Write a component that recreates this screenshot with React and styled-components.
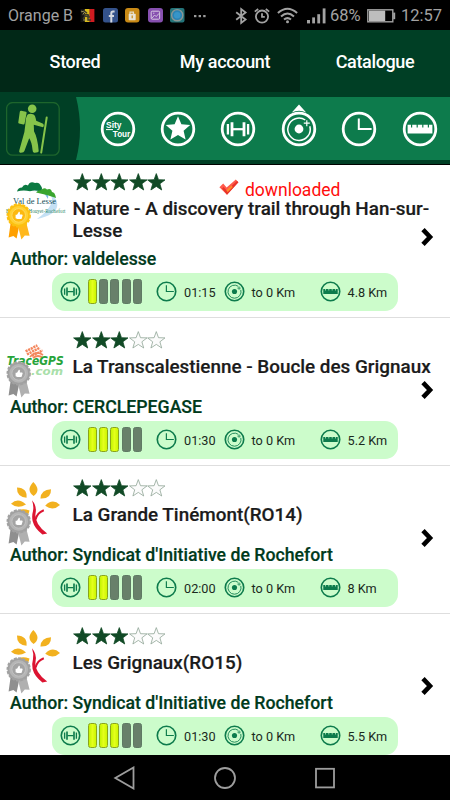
import React from "react";
import styled, { createGlobalStyle } from "styled-components";

const trails = [
  {
    logo: "lesse", medal: "gold", stars: 5, downloaded: true, level: 1,
    title: "Nature - A discovery trail through Han-sur-Lesse",
    author: "valdelesse", time: "01:15", away: "to 0 Km", length: "4.8 Km",
  },
  {
    logo: "trace", medal: "silver", stars: 3, level: 3,
    title: "La Transcalestienne - Boucle des Grignaux",
    author: "CERCLEPEGASE", time: "01:30", away: "to 0 Km", length: "5.2 Km",
  },
  {
    logo: "tree", medal: "silver", stars: 3, level: 2,
    title: "La Grande Tinémont(RO14)",
    author: "Syndicat d'Initiative de Rochefort", time: "02:00", away: "to 0 Km", length: "8 Km",
  },
  {
    logo: "tree", medal: "silver", stars: 3, level: 3,
    title: "Les Grignaux(RO15)",
    author: "Syndicat d'Initiative de Rochefort", time: "01:30", away: "to 0 Km", length: "5.5 Km",
  },
];

export default function App() {
  return (
    <Screen>
      <GlobalStyle />
      <StatusBar>
        <Carrier>Orange B</Carrier>
        <Notifications>
          <FlagIcon />
          <FacebookIcon />
          <LockIcon />
          <PictureIcon />
          <RingIcon />
        </Notifications>
        <MoreIcon />
        <SystemIcons />
        <Percent>68%</Percent>
        <BatteryIcon />
        <Clock>12:57</Clock>
      </StatusBar>

      <Tabs>
        <Tab>Stored</Tab>
        <Tab>My account</Tab>
        <Tab $active>Catalogue</Tab>
      </Tabs>

      <Toolbar>
        <HikerButton><HikerIcon /></HikerButton>
        <Strip>
          <StripEdge viewBox="0 0 5 63"><path d="M0 0 Q8 32 0 63 Z" fill="#003f25" /></StripEdge>
          {["city", "star", "dumbbell", "radar", "clock", "ruler"].map((name) => (
            <FilterButton key={name}><RoundIcon name={name} /></FilterButton>
          ))}
        </Strip>
      </Toolbar>

      <List>
        {trails.map((trail) => (
          <TrailRow key={trail.title} {...trail} />
        ))}
      </List>

      <NavBar>
        <NavIcon viewBox="0 0 24 24"><path d="M20.5 1.5v21L2.3 12z" /></NavIcon>
        <NavIcon viewBox="0 0 24 24"><circle cx="12" cy="12" r="10" /></NavIcon>
        <NavIcon viewBox="0 0 24 24"><rect x="3" y="2.8" width="18" height="18.6" /></NavIcon>
      </NavBar>
    </Screen>
  );
}

function TrailRow({ logo, medal, stars, downloaded, level, title, author, time, away, length }) {
  return (
    <Row>
      <RowTop $tall={downloaded}>
        <Thumb>
          <Logo name={logo} />
          <Medal tone={medal} />
        </Thumb>
        <Info>
          <Rating>
            {[0, 1, 2, 3, 4].map((i) => (
              <Star key={i} viewBox="0 0 18.6 18" $on={i < stars}>
                <path d="M9.3.6 11.5 6.7 18 6.9 12.9 10.8 14.7 17 9.3 13.4 3.9 17 5.7 10.8.6 6.9 7.1 6.7z" />
              </Star>
            ))}
            {downloaded && <Downloaded><CheckIcon />downloaded</Downloaded>}
          </Rating>
          <Title>{title}</Title>
        </Info>
      </RowTop>
      <Author>Author: {author}</Author>
      <Pill>
        <RoundIcon name="dumbbell" small />
        <Bars>
          {[0, 1, 2, 3, 4].map((i) => <Bar key={i} $on={i < level} />)}
        </Bars>
        <RoundIcon name="clock" small />
        <Value>{time}</Value>
        <RoundIcon name="radar" small />
        <Value>{away}</Value>
        <RoundIcon name="ruler" small />
        <Value>{length}</Value>
      </Pill>
      <Chevron viewBox="0 0 14 20"><path d="M3 2.6 10 10 3 17.4" /></Chevron>
    </Row>
  );
}

/*
Icons
*/
const glyphs = {
  city: (
    <g fill="currentColor" stroke="none" fontFamily="Liberation Sans, Arial, sans-serif" fontWeight="bold">
      <text x="6" y="16.6" fontSize="9.6" textLength="15.5" lengthAdjust="spacingAndGlyphs">Sity</text>
      <text x="12.8" y="25.6" fontSize="9.6" textLength="17.4" lengthAdjust="spacingAndGlyphs">Tour</text>
      <path d="M6 18.6h7" stroke="currentColor" strokeWidth="1" />
    </g>
  ),
  star: (
    <path d="M18 5.2 21.4 13.2 30.2 14 23.6 19.8 25.6 28.6 18 24 10.4 28.6 12.4 19.8 5.8 14 14.6 13.2z" fill="currentColor" stroke="none" />
  ),
  dumbbell: (
    <g strokeLinecap="butt">
      <path d="M12.8 18.2h10.4" strokeWidth="2.2" />
      <path d="M12 11.2v14M24 11.2v14" strokeWidth="2.8" />
      <path d="M7.9 13v10.4M28.1 13v10.4" strokeWidth="2.3" />
    </g>
  ),
  radar: (
    <g>
      <circle cx="18" cy="18" r="4.4" fill="currentColor" stroke="none" />
      <path d="M24.3 9A11.2 11.2 0 1 0 28.8 15.2" strokeWidth="1.5" />
      <path d="M25.8 9.2v6M22.8 12.2h6" strokeWidth="1.2" />
    </g>
  ),
  clock: <path d="M17.8 7.4v10.6h12.8" strokeWidth="2" />,
  ruler: (
    <path d="M5.6 13.8h3.4v2.6h1.2v-2.6h4.4v2.6h1.2v-2.6h4.4v2.6h1.2v-2.6h4.4v2.6h1.2v-2.6h3.4v8.6H5.6z" fill="currentColor" stroke="none" />
  ),
};

function RoundIcon({ name, small }) {
  return (
    <RoundSvg viewBox="0 0 36 36" $small={small}>
      <circle cx="18" cy="18" r="15.8" />
      {name === "radar" && !small && <path d="M10.8 1.6 18 -6.6 25.2 1.6Q18 -2 10.8 1.6z" fill="currentColor" stroke="none" />}
      {glyphs[name]}
    </RoundSvg>
  );
}

const HikerIcon = () => (
  <svg width="54" height="54" viewBox="0 0 54 54">
    <rect x=".6" y=".6" width="52.6" height="52.6" rx="6" fill="none" stroke="#1d652c" strokeWidth="1.3" />
    <g fill="#86c44a">
      <circle cx="26.2" cy="6.8" r="4.3" />
      <path d="M15.2 8.8 20 9.8Q20.8 10 20.6 11L18.6 21.4Q18.3 22.6 17.2 22.4L13 21.5Q12 21.2 12.3 20.2L13.8 9.8Q14 8.7 15.2 8.8z" />
      <path d="M22 12.2Q24.5 11 27.6 12.4Q29.4 13.4 30.2 18.8L36.6 21.4Q38.8 22.8 37 25.2L27.8 22.8 28 29.2Q31.6 35.6 32.7 49Q32.6 50.8 28.2 50.7Q26.6 50.6 26.5 47.8Q25.8 39.8 23.2 36.2Q21 42 18.4 49Q18 51 14 50.7Q12.6 50.3 13.4 48L18.4 30 19.4 22Q19.8 14 22 12.2z" />
    </g>
    <path d="M40.7 15.5 35.2 50.6" stroke="#86c44a" strokeWidth="2" strokeLinecap="round" />
  </svg>
);

const FlagIcon = () => (
  <svg width="15" height="15" viewBox="0 0 15 15">
    <path d="M.5 1h4.8v13H.5z" fill="#111" />
    <path d="M4.8 1h5v13h-5z" fill="#d9bd1a" />
    <path d="M9.6 1h4.8v13H9.6z" fill="#cf1b20" />
    <path d="M1 4.2 4 2.8 7 5M2 6.5h5L9 8M3 11 5 8l5 1M8 6v6h3" fill="none" stroke="#3c3a2c" strokeWidth="1.5" />
    <path d="M1 3 4 4M3 6l2-2M3 12h4" stroke="#aaa16a" strokeWidth=".8" />
  </svg>
);

const FacebookIcon = () => (
  <svg width="15" height="15" viewBox="0 0 15 15">
    <rect width="15" height="14.5" rx="2.5" fill="#34528b" />
    <path d="M11.6 3.6H10Q8.3 3.6 8.3 5.4V14.5M5.8 8h5.2" fill="none" stroke="#d5d9e0" strokeWidth="2" />
  </svg>
);

const LockIcon = () => (
  <svg width="15" height="15" viewBox="0 0 15 15">
    <rect width="14.5" height="14.5" rx="3" fill="#c98a16" />
    <path d="M5 6V4.2h3.4V6" fill="none" stroke="#e4dcc4" strokeWidth="1.2" />
    <rect x="3.7" y="5.8" width="7" height="6.4" rx=".6" fill="#e8e3d5" />
    <path d="M7.2 7.5v2.8" stroke="#c98a16" strokeWidth="1.2" />
  </svg>
);

const PictureIcon = () => (
  <svg width="15" height="15" viewBox="0 0 15 15">
    <rect width="15" height="14.5" rx="3" fill="#8750b0" />
    <rect x="3.2" y="3.2" width="8.4" height="8" rx="1" fill="none" stroke="#d8cae2" strokeWidth="1" />
    <path d="M3.8 10.4 6.6 7l1.6 1.6 2.8-3.2M5 5.2h1.4" fill="none" stroke="#d8cae2" strokeWidth=".9" />
  </svg>
);

const RingIcon = () => (
  <svg width="15" height="15" viewBox="0 0 15 15">
    <rect width="14.5" height="14.5" rx="2" fill="#24747a" />
    <circle cx="7.2" cy="7.2" r="5.6" fill="#2a83b4" stroke="#8b9593" strokeWidth="1.4" />
    <circle cx="7.2" cy="7.2" r="3.2" fill="#3795c8" />
  </svg>
);

const MoreIcon = () => (
  <MoreSvg viewBox="0 0 12 4" fill="#9b9b9b">
    <rect x="0" y="1" width="2.4" height="2.2" />
    <rect x="4.6" y="1" width="2.4" height="2.2" />
    <rect x="9.2" y="1" width="2.4" height="2.2" />
  </MoreSvg>
);

// bluetooth, alarm, wifi and signal strength
const SystemIcons = () => (
  <SystemGroup>
    <svg width="13" height="18" viewBox="0 0 13 18" fill="none" stroke="#a2a2a2" strokeWidth="1.8">
      <path d="M1.2 5.2 10.6 12.5 6.2 16V2L10.6 5.5 1.2 12.8" />
    </svg>
    <AlarmSvg viewBox="0 0 16 18" fill="none" stroke="#a2a2a2" strokeWidth="1.8">
      <circle cx="8" cy="9.6" r="6.1" />
      <path d="M8 6.2v3.7h2.8M.8 4.6 4.2 2M15.2 4.6 11.8 2" />
    </AlarmSvg>
    <WifiSvg viewBox="0 0 21 17" fill="none" stroke="#a2a2a2" strokeWidth="2">
      <path d="M.9 6.1Q10.5-2.5 20.1 6.1M4 9.5Q10.5 3.6 17 9.5M7 12.6Q10.5 9.6 14 12.6" />
      <circle cx="10.5" cy="14.8" r="1.5" fill="#a2a2a2" stroke="none" />
    </WifiSvg>
    <svg width="19" height="16" viewBox="0 0 19 16" fill="#a2a2a2">
      <rect x="0" y="12" width="3" height="3.4" />
      <rect x="5.2" y="9.4" width="2.8" height="6" />
      <rect x="10.3" y="6.2" width="2.8" height="9.2" />
      <rect x="15.7" y=".4" width="2.8" height="15" />
    </svg>
  </SystemGroup>
);

const BatteryIcon = () => (
  <BatterySvg viewBox="0 0 29 14">
    <rect x=".8" y=".8" width="25" height="12" fill="none" stroke="#a2a2a2" strokeWidth="1.4" />
    <rect x="2" y="1.6" width="16.2" height="10.4" fill="#bdbdbd" />
    <rect x="26.2" y="3.6" width="2" height="6.6" fill="#a2a2a2" />
  </BatterySvg>
);

const CheckIcon = () => (
  <CheckSvg viewBox="0 0 20 17">
    <path d="M.4 8.2 4.2 4.6 7.6 8.4 16.8.4 19.4 3.2 8 15.8z" fill="#ff5a4c" />
    <path d="M3 9.6 4.6 8 7.8 11.4 18 2 19.4 3.2 8 15.8z" fill="#e8342a" />
    <path d="M7.4 11.2 12.4 6.4 13.8 8 8.6 13.2z" fill="#ff8a2a" />
  </CheckSvg>
);

function Medal({ tone }) {
  const gold = tone === "gold";
  const edge = gold ? "#fcc010" : "#a1a1a1";
  const face = gold ? "#ffd033" : "#b5b5b5";
  const core = gold ? "#fdb90f" : "#a4a4a4";
  return (
    <MedalSvg viewBox="0 0 26 38">
      <path d="M4.6 20 13 24 10.6 35.6 7.4 33 2.6 34.4z" fill={gold ? "#ffa000" : "#8f8f8f"} />
      <path d="M12 23 20.4 20 23.6 32.8 18.8 32.6 15.4 36.6z" fill={gold ? "#ffb81c" : "#b0b0b0"} />
      <circle cx="12.7" cy="12.4" r="11.2" fill={edge} />
      <circle cx="12.7" cy="12.4" r="11.4" fill="none" stroke={edge} strokeWidth="1.6" strokeDasharray="3 1.4" />
      <circle cx="12.7" cy="12.4" r="9.4" fill={face} />
      <circle cx="12.7" cy="12.4" r="6.8" fill={core} stroke={gold ? "#ffe06c" : "#c7c7c7"} strokeWidth=".8" />
      <path d="M9.6 11.8h1.4L13 8.6q1.3 0 .9 2.8h2.1q.9.2.6 1.2l-.9 2.9q-.3.6-1 .6h-3.3L9.6 15.2z" fill="#fff" />
    </MedalSvg>
  );
}

function Logo({ name }) {
  if (name === "lesse") {
    return (
      <LogoSvg viewBox="0 3 62 60">
        <path d="M32 18Q52 18 52 26Q52 35 37 46Q55 42 57 34Q59 24 45 18z" fill="#c4e0f4" />
        <path d="M30 16Q45 18 48 26Q50 20 40 17z" fill="#78b9e6" />
        <path d="M17 18.5Q18 14.5 22 14.5Q24 10.5 28 12.5Q30 7.6 35 10Q39 8.5 41 13Q43 15 41 19Q36 16.6 30 18.2Q23 16.8 17 18.5z" fill="#0c7a42" />
        <path d="M36 19.6Q38 16.8 41 17.2Q44 13.6 47 16.4Q51 14.6 52 19Q55 19 56 25Q46 21.5 36 19.6z" fill="#3aa52f" />
        <g fontFamily="Liberation Serif, serif">
          <text x="13" y="31.4" fontSize="9.2" fill="#174f59" textLength="43" lengthAdjust="spacingAndGlyphs">Val de Lesse</text>
          <text x="6" y="39.6" fontSize="6.8" fill="#2c8766" textLength="59.5" lengthAdjust="spacingAndGlyphs">Beauraing-Houyet-Rochefort</text>
        </g>
      </LogoSvg>
    );
  }
  if (name === "trace") {
    return (
      <LogoSvg viewBox="0 -7 62 60">
        <g fill="none" stroke="#f4865c">
          <path d="M25.6 10.4 37.4 4.4M27 13.4 40 6.6M32 15 42.6 9.4" strokeWidth="2.5" strokeDasharray="2.2 .7" />
          <path d="M30 16Q36 9 43 14M33 17Q38 13 43 17" strokeWidth="1.8" />
        </g>
        <g fontFamily="DejaVu Sans, sans-serif" fontWeight="bold" fontStyle="italic">
          <text x="6.8" y="24" fontSize="11.4" fill="#27a43a" textLength="57" lengthAdjust="spacingAndGlyphs">TraceGPS</text>
          <text x="31" y="33.6" fontSize="11" fill="#a9dfaa" textLength="32" lengthAdjust="spacingAndGlyphs">.com</text>
        </g>
      </LogoSvg>
    );
  }
  return (
    <LogoSvg viewBox="0 0 62 60">
      <g fill="#f2b11f">
        <path d="M33.3 0Q41.5 8 33.6 14Q25.5 8 33.3 0z" />
        <path d="M17 5.5Q27.5 6 26.6 15.8Q16.5 14.8 17 5.5z" />
        <path d="M51 7.2Q51.5 17 40.4 16.4Q41 7.5 51 7.2z" />
        <path d="M11 21.8Q18 14.8 26 22.5Q17.5 27.5 11 21.8z" />
        <path d="M45.2 23.8Q52.5 15.8 60 23Q53 29.5 45.2 23.8z" />
        <path d="M16 31Q20 25 29.5 28.5Q28 36 22 37z" />
      </g>
      <path d="M32 18.2Q37 24 35.6 31Q34.6 36 38 42Q41 47 47.2 51.6L42.4 52.4Q34.5 46.5 32.6 39Q31.6 34 33 29Q34 24 32 18.2z" fill="#dc1431" />
      <path d="M43.8 28.2Q37 30.8 35.6 37.5" fill="none" stroke="#dc1431" strokeWidth="2" />
    </LogoSvg>
  );
}

/*
Frame Part
*/
const GlobalStyle = createGlobalStyle`
  * {
    box-sizing: border-box;
  }
  body {
    margin: 0;
    background: #000;
    font-family: Roboto, "Liberation Sans", sans-serif;
  }
  svg {
    display: block;
    flex-shrink: 0;
  }
`;

const Screen = styled.div`
  width: 450px;
  height: 800px;
  display: flex;
  flex-direction: column;
  overflow: hidden;
  background-color: #000;
`;

const StatusBar = styled.div`
  height: 30px;
  display: flex;
  align-items: center;
  flex-shrink: 0;
  padding: 1px 9px 0 8px;
  color: #a2a2a2;
  white-space: nowrap;
`;

const Carrier = styled.span`
  width: 72px;
  font-size: 16px;
`;

const Notifications = styled.div`
  display: flex;
  gap: 7.5px;
`;

const MoreSvg = styled.svg`
  width: 12px;
  height: 4px;
  margin-left: 9px;
`;

const SystemGroup = styled.div`
  display: flex;
  align-items: center;
  margin-left: auto;
`;

const AlarmSvg = styled.svg`
  width: 16px;
  height: 18px;
  margin-left: 6px;
`;

const WifiSvg = styled.svg`
  width: 21px;
  height: 17px;
  margin: 0 9px 0 7px;
`;

const Percent = styled.span`
  width: 33px;
  margin-left: 4px;
  font-size: 16.5px;
`;

const BatterySvg = styled.svg`
  width: 29px;
  height: 14px;
  margin-left: 4px;
`;

const Clock = styled.span`
  width: 40px;
  margin-left: 5px;
  font-size: 16.5px;
`;

/*
Header Part
*/
const Tabs = styled.div`
  height: 62px;
  display: grid;
  grid-template-columns: repeat(3, 1fr);
  flex-shrink: 0;
`;

const Tab = styled.div`
  display: flex;
  align-items: center;
  justify-content: center;
  padding-top: 1px;
  background-color: ${props => props.$active ? "#003f25" : "#012817"};
  color: #fff;
  font-size: 18px;
  font-weight: 500;
  letter-spacing: -0.35px;
`;

const Toolbar = styled.div`
  height: 73px;
  display: flex;
  flex-shrink: 0;
  padding: 5px 0 4px;
  background-color: #003f25;
  border-bottom: 1px solid #000;
`;

const HikerButton = styled.div`
  width: 76px;
  padding: 5px 0 0 6px;
`;

const Strip = styled.div`
  flex: 1;
  display: flex;
  align-items: center;
  background-color: #0d7b4c;
`;

const StripEdge = styled.svg`
  width: 5px;
  height: 63px;
  margin-right: 6.5px;
`;

const FilterButton = styled.div`
  width: 60.4px;
  display: flex;
  justify-content: center;
  color: #fff;
`;

const RoundSvg = styled.svg`
  width: ${props => props.$small ? "21px" : "36px"};
  height: ${props => props.$small ? "21px" : "36px"};
  overflow: visible;
  fill: none;
  stroke: currentColor;
  stroke-width: 2.8;
`;

/*
List Part
*/
const List = styled.div`
  flex: 1;
  min-height: 0;
  overflow: hidden;
  background-color: #fff;
`;

const Row = styled.div`
  position: relative;
  padding-bottom: 6.5px;
  border-bottom: 1px solid #dedede;
`;

const RowTop = styled.div`
  display: flex;
  height: ${props => props.$tall ? "83px" : "78px"};
  padding-top: ${props => props.$tall ? "8px" : "13px"};
`;

const Thumb = styled.div`
  position: relative;
  width: 73px;
  height: 68px;
`;

const LogoSvg = styled.svg`
  width: 62px;
  height: 60px;
  margin-top: 3px;
  overflow: visible;
`;

const MedalSvg = styled.svg`
  position: absolute;
  left: 6px;
  top: 30px;
  width: 26px;
  height: 38px;
`;

const Info = styled.div`
  flex: 1;
`;

const Rating = styled.div`
  height: 18px;
  display: flex;
  margin-bottom: 6.5px;
`;

const Star = styled.svg`
  width: 18.6px;
  height: 18px;
  fill: ${props => props.$on ? "#114a26" : "#fbfbfb"};
  stroke: ${props => props.$on ? "#114a26" : "#8fa596"};
  stroke-width: 0.8;
`;

const Downloaded = styled.span`
  display: flex;
  height: 20px;
  margin: 6px 0 0 53px;
  color: #ff0d0d;
  font-size: 17.5px;
  line-height: 22px;
`;

const CheckSvg = styled.svg`
  width: 20px;
  height: 17px;
  margin-right: 6px;
`;

const Title = styled.h2`
  width: 366px;
  margin: 0 0 0 -0.5px;
  color: #1b1b1b;
  font-size: 18.86px;
  font-weight: 500;
  line-height: 22px;
  -webkit-text-stroke: 0.2px #1b1b1b;
`;

const Author = styled.p`
  height: 22px;
  margin: 0 0 3px;
  padding-left: 10px;
  color: #003a1c;
  font-size: 17.7px;
  font-weight: 500;
  line-height: 22px;
  -webkit-text-stroke: 0.2px #003a1c;
`;

const Pill = styled.div`
  width: 346px;
  height: 37.5px;
  display: grid;
  grid-template-columns: 28px 68px 28px 39.5px 28px 68px 28px auto;
  align-items: center;
  margin-left: 52px;
  padding-left: 8px;
  border-radius: 13px;
  background-color: #ccfccb;
  color: #0d7b4c;
`;

const Bars = styled.div`
  display: flex;
  gap: 2.2px;
`;

const Bar = styled.span`
  width: 9px;
  height: 25px;
  border: 1px solid ${props => props.$on ? "#8aa51a" : "#5f7a64"};
  border-radius: 2.5px;
  background: ${props => props.$on ? "linear-gradient(90deg, #c4f400, #e4ff1c 50%, #ccf600)" : "#68806a"};
`;

const Value = styled.span`
  padding-top: 1.5px;
  color: #1a2a1d;
  font-size: 12.7px;
  white-space: nowrap;
`;

const Chevron = styled.svg`
  position: absolute;
  left: 420px;
  top: 62px;
  width: 14px;
  height: 20px;
  fill: none;
  stroke: #000;
  stroke-width: 4.6;
`;

/*
Bottom Part
*/
const NavBar = styled.div`
  height: 45px;
  display: flex;
  justify-content: center;
  align-items: center;
  gap: 76px;
  flex-shrink: 0;
  background-color: #000;
`;

const NavIcon = styled.svg`
  width: 24px;
  height: 24px;
  fill: none;
  stroke: #9d9d9d;
  stroke-width: 1.8;
`;
